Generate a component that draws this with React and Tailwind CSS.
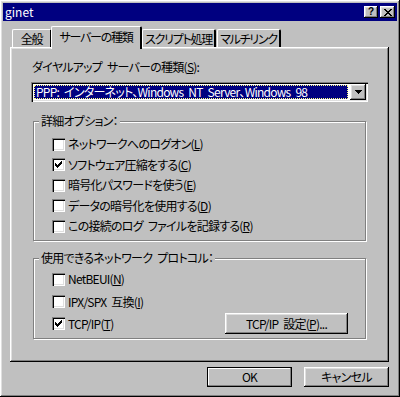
import React from "react";

const raised =
  "shadow-[inset_-1px_-1px_#000,inset_1px_1px_#fff,inset_-2px_-2px_#808080,inset_2px_2px_#dfdfdf]";
const sunken =
  "shadow-[inset_1px_1px_#808080,inset_2px_2px_#000,inset_-1px_-1px_#fff,inset_-2px_-2px_#dfdfdf]";

function Check() {
  const cols = [2, 3, 4, 3, 2, 1, 0];
  return (
    <svg width="7" height="7" viewBox="0 0 7 7" shapeRendering="crispEdges">
      {cols.map((y, x) => (
        <rect key={x} x={x} y={y} width="1" height="3" fill="#000" />
      ))}
    </svg>
  );
}

function CheckBox({ checked, children }) {
  return (
    <div className="flex items-center gap-[3px]">
      <span
        className={`w-[13px] h-[13px] bg-white flex items-center justify-center shrink-0 ${sunken}`}
      >
        {checked && <Check />}
      </span>
      <span className="leading-[14px] whitespace-nowrap">{children}</span>
    </div>
  );
}

function Group({ title, className, children }) {
  return (
    <div
      className={`relative mx-[2px] border border-[#808080] shadow-[1px_1px_0_#fff,inset_1px_1px_0_#fff] ${className}`}
    >
      <span className="absolute -top-[8px] left-[5px] px-[2px] bg-[#c0c0c0] leading-[14px] whitespace-nowrap">
        {title}
      </span>
      {children}
    </div>
  );
}

function U({ children }) {
  return <span className="underline underline-offset-[1px]">{children}</span>;
}

function Tab({ selected, children, className }) {
  if (selected) {
    return (
      <div
        className={`relative z-10 -mb-[2px] h-[23px] bg-[#c0c0c0] border-l border-t border-white border-r-2 border-r-black rounded-t-[2px] flex items-start justify-center pt-[3px] ${className}`}
      >
        <span className="leading-[14px] whitespace-nowrap tracking-[-1.25px]">{children}</span>
      </div>
    );
  }
  return (
    <div
      className={`h-[18px] bg-[#c0c0c0] border-l border-t border-white border-r-2 border-r-black rounded-t-[2px] flex items-start justify-center pt-[2px] ${className}`}
    >
      <span className="leading-[14px] whitespace-nowrap tracking-[-1.25px]">{children}</span>
    </div>
  );
}

function Button({ children, def, className }) {
  return (
    <div
      className={`flex items-center justify-center bg-[#c0c0c0] ${
        def
          ? "border border-black shadow-[inset_-1px_-1px_#808080,inset_1px_1px_#fff,inset_-2px_-2px_#c0c0c0]"
          : raised
      } ${className}`}
    >
      <span className="leading-[14px] whitespace-nowrap">{children}</span>
    </div>
  );
}

export default function App() {
  return (
    <div
      className={`w-[400px] h-[397px] bg-[#c0c0c0] p-[3px] flex flex-col text-[12px] tracking-[-0.75px] [word-spacing:3px] text-black font-['Noto_Sans_CJK_JP',sans-serif] [font-feature-settings:"palt"] ${raised}`}
    >
      {/* Title bar */}
      <div className="h-[18px] bg-[#000080] flex items-center pl-[2px] pr-[2px] shrink-0">
        <span className="text-white leading-[14px] text-[12px] tracking-normal flex-1">ginet</span>
        <div
          className={`w-[14px] h-[12px] flex items-center justify-center ${raised} bg-[#c0c0c0]`}
        >
          <span className="text-[10px] font-bold leading-[10px] tracking-normal font-['Liberation_Sans',sans-serif]">?</span>
        </div>
        <div
          className={`ml-[2px] w-[15px] h-[12px] flex items-center justify-center ${raised} bg-[#c0c0c0]`}
        >
          <svg width="8" height="7" viewBox="0 0 8 7" shapeRendering="crispEdges">
            <path d="M0 0h2v1h-2zM6 0h2v1h-2zM1 1h2v1h-2zM5 1h2v1h-2zM2 2h4v1h-4zM3 3h2v1h-2zM2 4h4v1h-4zM1 5h2v1h-2zM5 5h2v1h-2zM0 6h2v1h-2zM6 6h2v1h-2z" fill="#000" />
          </svg>
        </div>
      </div>

      {/* Tabs */}
      <div className="mt-[5px] pl-[9px] flex items-end h-[21px] shrink-0 relative z-10">
        <Tab className="w-[40px]">全般</Tab>
        <Tab selected className="-ml-[1px] w-[91px]">サーバーの種類</Tab>
        <Tab className="w-[74px]">スクリプト処理</Tab>
        <Tab className="ml-[1px] w-[64px]">マルチリンク</Tab>
      </div>

      {/* Panel */}
      <div
        className={`ml-[7px] w-[379px] h-[315px] px-[21px] pt-[13px] flex flex-col shrink-0 ${raised}`}
      >
        <div className="pl-[1px] leading-[14px]">
          ダイヤルアップ サーバーの種類(<U>S</U>):
        </div>
        <div className={`mt-[8px] h-[20px] bg-white flex items-center p-[3px] ${sunken}`}>
          <div className="flex-1 h-[14px] bg-[#000080] outline-1 outline-dotted outline-[#ffff80] -outline-offset-1 flex items-center pl-[2px]">
            <span className="text-white leading-[14px] whitespace-nowrap">
              PPP: インターネット、Windows NT Server、Windows 98
            </span>
          </div>
          <div className={`ml-[2px] w-[16px] h-[16px] -mr-[1px] bg-[#c0c0c0] flex items-center justify-center ${raised}`}>
            <svg width="7" height="4" viewBox="0 0 7 4" shapeRendering="crispEdges">
              <path d="M0 0h7v1h-7zM1 1h5v1h-5zM2 2h3v1h-3zM3 3h1v1h-1z" fill="#000" />
            </svg>
          </div>
        </div>

        <Group title="詳細オプション：" className="mt-[19px] h-[120px] pl-[18px] pt-[15px]">
          <div className="flex flex-col">
            <div className="h-[20.5px]"><CheckBox>ネットワークへのログオン(<U>L</U>)</CheckBox></div>
            <div className="h-[20.5px]"><CheckBox checked>ソフトウェア圧縮をする(<U>C</U>)</CheckBox></div>
            <div className="h-[20.5px]"><CheckBox>暗号化パスワードを使う(<U>E</U>)</CheckBox></div>
            <div className="h-[20.5px]"><CheckBox>データの暗号化を使用する(<U>D</U>)</CheckBox></div>
            <div className="h-[20.5px]"><CheckBox>この接続のログ ファイルを記録する(<U>R</U>)</CheckBox></div>
          </div>
        </Group>

        <Group title="使用できるネットワーク プロトコル：" className="mt-[17px] h-[81px] pl-[18px] pr-[17px] pt-[13px]">
          <div className="flex flex-col">
            <div className="h-[22.5px]"><CheckBox>NetBEUI(<U>N</U>)</CheckBox></div>
            <div className="h-[22.5px]"><CheckBox>IPX/SPX 互換(<U>I</U>)</CheckBox></div>
            <div className="flex items-center justify-between -mt-[4px]">
              <CheckBox checked>TCP/IP(<U>T</U>)</CheckBox>
              <Button className="w-[123px] h-[21px]">TCP/IP 設定(<U>P</U>)...</Button>
            </div>
          </div>
        </Group>
      </div>

      {/* Buttons */}
      <div className="mt-[5px] flex justify-end gap-[12px] pr-[8px]">
        <Button def className="w-[85px] h-[20px]">OK</Button>
        <Button className="w-[85px] h-[20px]">キャンセル</Button>
      </div>
    </div>
  );
}
